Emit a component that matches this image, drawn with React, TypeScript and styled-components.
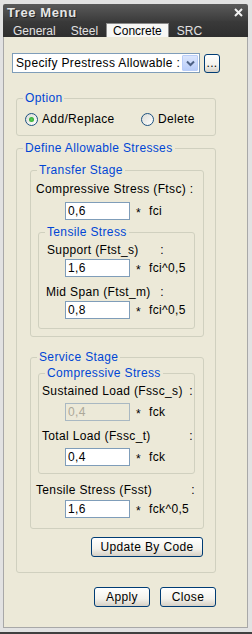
import React from 'react';
import styled, { createGlobalStyle } from 'styled-components';

const GlobalStyle = createGlobalStyle`
  body {
    margin: 0;
    background: #ffffff;
    font-family: 'Liberation Sans', Arial, sans-serif;
  }
`;

const Frame = styled.div`
  width: 252px;
  height: 634px;
  box-sizing: border-box;
  padding: 4px 4px 4px 3px;
  background: #e2e2e2;
  border-bottom: 2px solid #404040;
  display: flex;
  flex-direction: column;
`;

const TitleBar = styled.div`
  height: 17px;
  display: flex;
  align-items: center;
  justify-content: space-between;
  padding: 0 5px 0 4px;
  background: linear-gradient(#5a5a5a, #3c3c3c);
  border-radius: 2px 2px 0 0;
`;

const Title = styled.span`
  font: bold 13px/17px 'Liberation Sans', Arial, sans-serif;
  letter-spacing: 0.6px;
  color: #e6e6e6;
  text-shadow: 1px 1px 0 #222;
`;

const TabRow = styled.div`
  height: 16px;
  display: flex;
  align-items: flex-end;
  gap: 1px;
  padding-left: 3px;
  background: linear-gradient(#3a3a3a, #2e2e2e);
`;

const Tab = styled.div<{ $active?: boolean }>`
  height: 12px;
  padding: 1px 6px 0 6px;
  font: 12px/12px 'Liberation Sans', Arial, sans-serif;
  color: ${p => (p.$active ? '#000' : '#e2e2e2')};
  background: ${p => (p.$active ? '#f7f7f5' : 'transparent')};
  border: 1px solid ${p => (p.$active ? '#8a8a8a' : 'transparent')};
  border-bottom: none;
`;

const Content = styled.div`
  flex: 1;
  background: #ece9d8;
  border: 1px solid #a8a8a8;
  border-top: none;
  padding: 16px 0 0 8px;
  font: 12px/14px 'Liberation Sans', Arial, sans-serif;
  letter-spacing: 0.35px;
  color: #000;
`;

const SelectRow = styled.div`
  display: flex;
  align-items: center;
  height: 20px;
  gap: 4px;
`;

const Select = styled.div`
  width: 188px;
  height: 20px;
  box-sizing: border-box;
  border: 1px solid #7f9db9;
  background: #fff;
  display: flex;
  align-items: center;
  justify-content: space-between;
  padding: 0 1px 0 3px;
  white-space: nowrap;
  overflow: hidden;
`;

const DropButton = styled.div`
  width: 16px;
  height: 16px;
  flex: none;
  box-sizing: border-box;
  border: 1px solid #b9cdf8;
  border-radius: 1px;
  background: linear-gradient(#dbe6fd, #b9cdf9);
  display: flex;
  align-items: center;
  justify-content: center;
`;

const Button = styled.button<{ $w: number; $h?: number }>`
  width: ${p => p.$w}px;
  height: ${p => p.$h ?? 20}px;
  box-sizing: border-box;
  padding: 0;
  border: 1px solid #003c74;
  border-radius: 3px;
  background: linear-gradient(#ffffff, #f3f2ec 60%, #d6d0c5);
  font: 12px/14px 'Liberation Sans', Arial, sans-serif;
  letter-spacing: 0.35px;
  color: #000;
`;

const Group = styled.fieldset<{ $w: number; $mt: number; $ml: number }>`
  width: ${p => p.$w}px;
  margin: ${p => p.$mt}px 0 0 ${p => p.$ml}px;
  padding: 0;
  min-width: 0;
  box-sizing: border-box;
  border: 1px solid #d0d0bf;
  border-radius: 3px;
`;

const Legend = styled.legend`
  margin-left: 6px;
  padding: 0 2px;
  font: 12px/14px 'Liberation Sans', Arial, sans-serif;
  letter-spacing: 0.35px;
  color: #0046d5;
`;

const Body = styled.div<{ $pb: number }>`
  padding-bottom: ${p => p.$pb}px;
  display: flex;
  flex-direction: column;
`;

const RadioRow = styled.div`
  display: flex;
  align-items: center;
  height: 16px;
  margin: 6px 0 0 8px;
`;

const RadioItem = styled.label<{ $w: number }>`
  width: ${p => p.$w}px;
  display: flex;
  align-items: center;
  gap: 4px;
`;

const RadioCircle = styled.span<{ $on?: boolean }>`
  width: 13px;
  height: 13px;
  box-sizing: border-box;
  border-radius: 50%;
  border: 1px solid #1c5180;
  background: linear-gradient(135deg, #dcdcd5, #ffffff);
  display: flex;
  align-items: center;
  justify-content: center;
  &::after {
    content: '';
    width: 5px;
    height: 5px;
    border-radius: 50%;
    background: ${p => (p.$on ? 'radial-gradient(#5ccb5c, #21a121)' : 'transparent')};
  }
`;

const Label = styled.div<{ $mt: number; $ml: number; $w?: number }>`
  margin: ${p => p.$mt}px 0 0 ${p => p.$ml}px;
  height: 14px;
  width: ${p => (p.$w ? `${p.$w}px` : 'auto')};
  display: flex;
  justify-content: space-between;
  white-space: nowrap;
`;

const ValueRow = styled.div<{ $mt: number; $pl: number }>`
  margin-top: ${p => p.$mt}px;
  padding-left: ${p => p.$pl}px;
  display: flex;
  align-items: center;
  height: 18px;
`;

const Field = styled.input`
  width: 65px;
  height: 18px;
  box-sizing: border-box;
  border: 1px solid #7f9db9;
  padding: 0 2px;
  margin: 0;
  font: 12px 'Liberation Sans', Arial, sans-serif;
  letter-spacing: 0.35px;
  color: #000;
  background: #fff;
  outline: none;
  &:disabled {
    background: #ece9d8;
    border-color: #a9b8c2;
    color: #aca899;
  }
`;

const Star = styled.span`
  margin: 3px 0 0 6px;
  font-size: 12px;
`;

const Unit = styled.span`
  margin-left: 8px;
`;

const RightRow = styled.div<{ $mt: number; $pr: number; $w?: number; $ml?: number }>`
  margin: ${p => p.$mt}px ${p => p.$pr}px 0 ${p => p.$ml ?? 0}px;
  width: ${p => (p.$w ? `${p.$w}px` : 'auto')};
  display: flex;
  justify-content: flex-end;
  gap: 10px;
`;

type ValueProps = { value: string; unit: string; mt: number; pl: number; disabled?: boolean };

function Value({ value, unit, mt, pl, disabled }: ValueProps) {
  return (
    <ValueRow $mt={mt} $pl={pl}>
      <Field defaultValue={value} disabled={disabled} />
      <Star>*</Star>
      <Unit>{unit}</Unit>
    </ValueRow>
  );
}

function ColonLabel({ text, mt, ml, w }: { text: string; mt: number; ml: number; w: number }) {
  return (
    <Label $mt={mt} $ml={ml} $w={w}>
      <span>{text}</span>
      <span>:</span>
    </Label>
  );
}

export default function App() {
  return (
    <>
      <GlobalStyle />
      <Frame>
        <TitleBar>
          <Title>Tree Menu</Title>
          <svg width="9" height="9" viewBox="0 0 9 9">
            <path d="M1 1 L8 8 M8 1 L1 8" stroke="#f2f2f2" strokeWidth="2" />
          </svg>
        </TitleBar>
        <TabRow>
          <Tab>General</Tab>
          <Tab>Steel</Tab>
          <Tab $active>Concrete</Tab>
          <Tab>SRC</Tab>
        </TabRow>
        <Content>
          <SelectRow>
            <Select>
              <span>Specify Prestress Allowable :</span>
              <DropButton>
                <svg width="9" height="7" viewBox="0 0 9 7">
                  <path d="M1 1.5 L4.5 5 L8 1.5" fill="none" stroke="#4d6185" strokeWidth="2" />
                </svg>
              </DropButton>
            </Select>
            <Button $w={16} $h={19}>...</Button>
          </SelectRow>

          <Group $w={200} $mt={18} $ml={4}>
            <Legend>Option</Legend>
            <Body $pb={8}>
              <RadioRow>
                <RadioItem $w={116}>
                  <RadioCircle $on />
                  Add/Replace
                </RadioItem>
                <RadioItem $w={70}>
                  <RadioCircle />
                  Delete
                </RadioItem>
              </RadioRow>
            </Body>
          </Group>

          <Group $w={200} $mt={5} $ml={4}>
            <Legend>Define Allowable Stresses</Legend>
            <Body $pb={15}>
              <Group $w={174} $mt={8} $ml={13}>
                <Legend>Transfer Stage</Legend>
                <Body $pb={7}>
                  <Label $mt={5} $ml={5}>Compressive Stress (Ftsc) :</Label>
                  <Value value="0,6" unit="fci" mt={6} pl={34} />
                  <Group $w={157} $mt={5} $ml={7}>
                    <Legend>Tensile Stress</Legend>
                    <Body $pb={9}>
                      <ColonLabel text="Support (Ftst_s)" mt={4} ml={8} w={117} />
                      <Value value="1,6" unit="fci^0,5" mt={2} pl={26} />
                      <ColonLabel text="Mid Span (Ftst_m)" mt={8} ml={7} w={118} />
                      <Value value="0,8" unit="fci^0,5" mt={2} pl={26} />
                    </Body>
                  </Group>
                </Body>
              </Group>

              <Group $w={174} $mt={13} $ml={13}>
                <Legend>Service Stage</Legend>
                <Body $pb={10}>
                  <Group $w={157} $mt={2} $ml={7}>
                    <Legend>Compressive Stress</Legend>
                    <Body $pb={7}>
                      <ColonLabel text="Sustained Load (Fssc_s)" mt={4} ml={3} w={151} />
                      <Value value="0,4" unit="fck" mt={5} pl={26} disabled />
                      <ColonLabel text="Total Load (Fssc_t)" mt={8} ml={3} w={151} />
                      <Value value="0,4" unit="fck" mt={5} pl={26} />
                    </Body>
                  </Group>
                  <ColonLabel text="Tensile Stress (Fsst)" mt={9} ml={5} w={159} />
                  <Value value="1,6" unit="fck^0,5" mt={3} pl={34} />
                </Body>
              </Group>

              <RightRow $mt={8} $pr={12}>
                <Button $w={112}>Update By Code</Button>
              </RightRow>
            </Body>
          </Group>

          <RightRow $mt={14} $pr={0} $w={200} $ml={4}>
            <Button $w={56}>Apply</Button>
            <Button $w={56}>Close</Button>
          </RightRow>
        </Content>
      </Frame>
    </>
  );
}
